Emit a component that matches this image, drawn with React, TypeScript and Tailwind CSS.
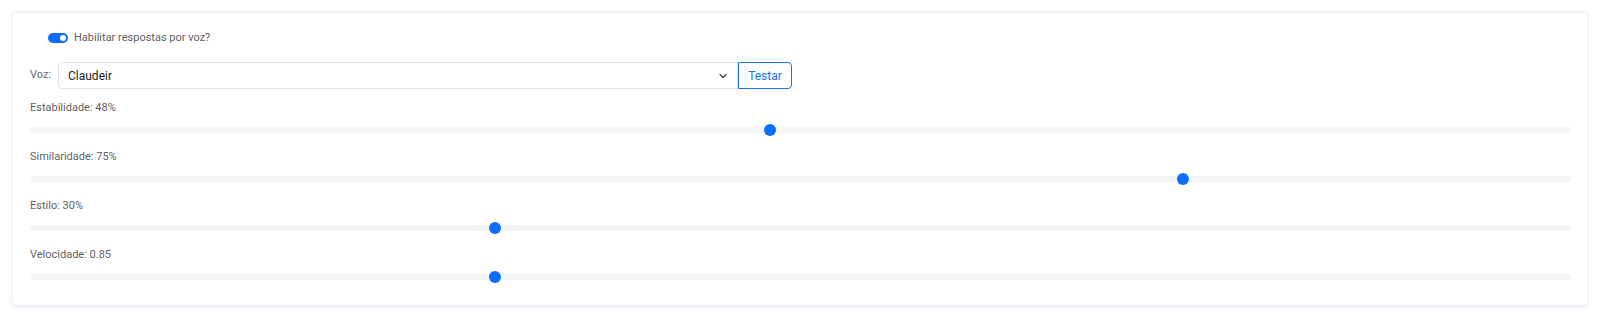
import React, { useState } from 'react';

const IconChevron = () => (
    <svg xmlns="http://www.w3.org/2000/svg" width="8" height="8" viewBox="0 0 16 16" fill="none" stroke="#343a40" strokeWidth="2.4" strokeLinecap="round" strokeLinejoin="round"><path d="M2 5l6 6 6-6" /></svg>
);

const Slider = ({ label, pct }: { label: string; pct: number }) => (
    <div className="flex flex-col">
        <div className="h-[22px] pt-[7px] text-[11px] leading-[14px] text-[#5f5f5f]">{label}</div>
        <div className="relative h-[27px] flex items-center">
            <div className="h-[6px] w-full rounded-full bg-[#f4f5f7]" />
            <div
                className="absolute top-1/2 -translate-y-1/2 h-[12px] w-[12px] rounded-full bg-[#0d6efd]"
                style={{ left: `calc(${pct}% - ${pct * 0.12}px)` }}
            />
        </div>
    </div>
);

export default function App() {
    const [enabled, setEnabled] = useState(true);
    const sliders = [
        { label: 'Estabilidade: 48%', pct: 48 },
        { label: 'Similaridade: 75%', pct: 75 },
        { label: 'Estilo: 30%', pct: 30 },
        { label: 'Velocidade: 0.85', pct: 30 },
    ];

    return (
        <div className="min-h-[319px] bg-white px-[12px] pt-[12px] font-['Roboto',sans-serif]">
            <div className="rounded-[4px] bg-white border border-[#f1f1f6] shadow-[0_1px_4px_rgba(120,110,220,0.18)] pl-[17px] pr-[16px] pt-[17px] pb-[15px]">
                <div className="flex items-center gap-[6px] pl-[18px] h-[16px]">
                    <button
                        onClick={() => setEnabled(v => !v)}
                        className="relative h-[10px] w-[20px] rounded-full bg-[#0d6efd]"
                    >
                        <span className={`absolute top-[2px] h-[6px] w-[6px] rounded-full bg-white ${enabled ? 'right-[2px]' : 'left-[2px]'}`} />
                    </button>
                    <span className="text-[11px] text-[#5f5f5f]">Habilitar respostas por voz?</span>
                </div>

                <div className="mt-[16px] flex items-center">
                    <span className="w-[28px] text-[11px] text-[#6a6a6a]">Voz:</span>
                    <div className="flex h-[27px] w-[680px] items-center justify-between rounded-l-[4px] border border-[#dee2e6] pl-[9px] pr-[10px] text-[12px] text-[#222]">
                        <span>Claudeir</span>
                        <IconChevron />
                    </div>
                    <button className="h-[27px] w-[54px] rounded-r-[4px] border border-[#1a73e8] text-[12px] text-[#1a73e8]">Testar</button>
                </div>

                <div className="mt-[5px] flex flex-col">
                    {sliders.map(s => (
                        <Slider key={s.label} label={s.label} pct={s.pct} />
                    ))}
                </div>
            </div>
        </div>
    );
}
